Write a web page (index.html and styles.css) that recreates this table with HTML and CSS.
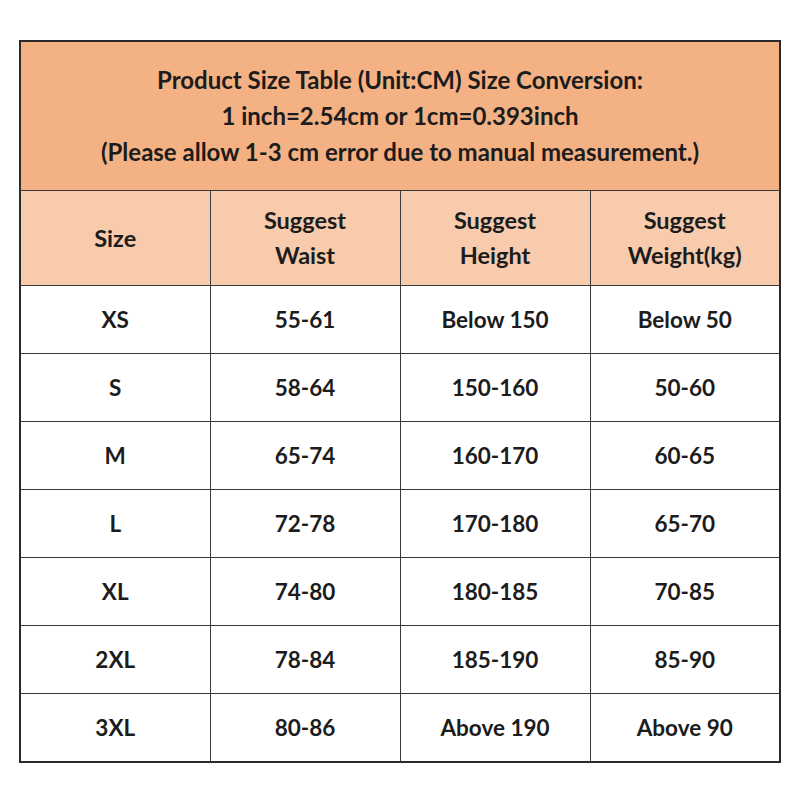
FILE: index.html
```html
<!DOCTYPE html>
<html>
<head>
<meta charset="utf-8">
<link rel="stylesheet" href="styles.css">
</head>
<body>
<table class="size-table">
  <tr class="title-row">
    <td colspan="4">Product Size Table (Unit:CM) Size Conversion:<br>1 inch=2.54cm or 1cm=0.393inch<br>(Please allow 1-3 cm error due to manual measurement.)</td>
  </tr>
  <tr class="head-row">
    <td>Size</td>
    <td>Suggest<br>Waist</td>
    <td>Suggest<br>Height</td>
    <td>Suggest<br>Weight(kg)</td>
  </tr>
  <tr class="data-row"><td>XS</td><td>55-61</td><td>Below 150</td><td>Below 50</td></tr>
  <tr class="data-row"><td>S</td><td>58-64</td><td>150-160</td><td>50-60</td></tr>
  <tr class="data-row"><td>M</td><td>65-74</td><td>160-170</td><td>60-65</td></tr>
  <tr class="data-row"><td>L</td><td>72-78</td><td>170-180</td><td>65-70</td></tr>
  <tr class="data-row"><td>XL</td><td>74-80</td><td>180-185</td><td>70-85</td></tr>
  <tr class="data-row"><td>2XL</td><td>78-84</td><td>185-190</td><td>85-90</td></tr>
  <tr class="data-row"><td>3XL</td><td>80-86</td><td>Above 190</td><td>Above 90</td></tr>
</table>
</body>
</html>
```
FILE: styles.css
```css
html, body {
  margin: 0;
  padding: 0;
  background: #ffffff;
}
body {
  padding: 40px 19px;
  font-family: Lato, "Open Sans", sans-serif;
  color: #1c1c1c;
}
.size-table {
  width: 762px;
  border-collapse: collapse;
  border: 2px solid #2b2b2b;
  table-layout: fixed;
}
.size-table td {
  border: 1px solid #3a3a3a;
  text-align: center;
  vertical-align: middle;
  padding: 0;
  font-weight: 700;
  font-size: 22.5px;
}
.title-row td {
  background: #f4b183;
  height: 148px;
  line-height: 36px;
  font-size: 24px;
  padding-top: 0;
}
.head-row td {
  background: #f8cbad;
  height: 94px;
  line-height: 35px;
  font-size: 23.5px;
}
.data-row td {
  height: 67px;
  background: #ffffff;
}
```
